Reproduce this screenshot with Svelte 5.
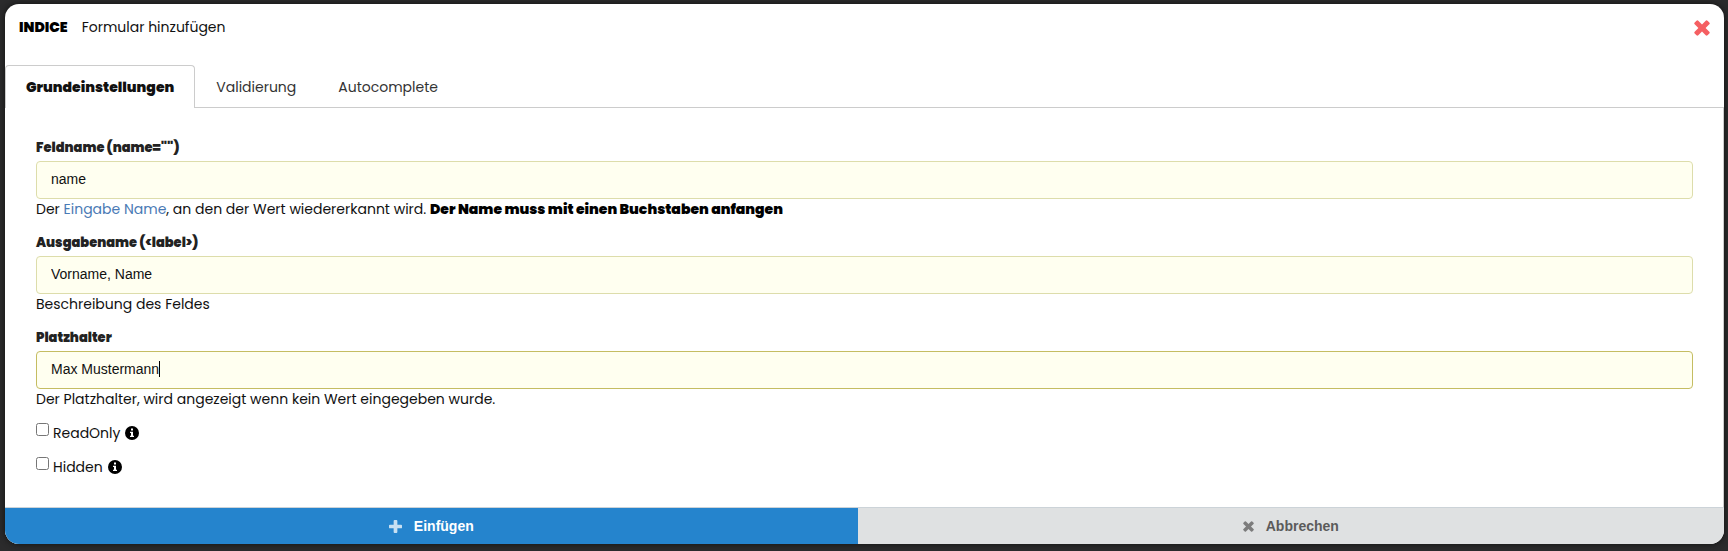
<script lang="ts">
  import { onMount } from 'svelte';

  const tabs = ['Grundeinstellungen', 'Validierung', 'Autocomplete'];

  let activeTab = $state(0);
  let fieldName = $state('name');
  let outputName = $state('Vorname, Name');
  let placeholder = $state('Max Mustermann');
  let readOnly = $state(false);
  let hidden = $state(false);

  let placeholderInput: HTMLInputElement;
  let caretOffset = $state(0);

  function updateCaret() {
    const ctx = document.createElement('canvas').getContext('2d');
    if (!ctx) return;
    ctx.font = getComputedStyle(placeholderInput).font;
    caretOffset = Math.round(ctx.measureText(placeholder).width);
  }

  onMount(updateCaret);
</script>

{#snippet cross()}
  <svg class="icon" viewBox="0 0 16 16" aria-hidden="true">
    <path d="M4.3.7 8 4.4 11.7.7q.9-.9 1.8 0l1.8 1.8q.9.9 0 1.8L11.6 8l3.7 3.7q.9.9 0 1.8l-1.8 1.8q-.9.9-1.8 0L8 11.6l-3.7 3.7q-.9.9-1.8 0L.7 13.5q-.9-.9 0-1.8L4.4 8 .7 4.3q-.9-.9 0-1.8L2.5.7q.9-.9 1.8 0z" />
  </svg>
{/snippet}

{#snippet info()}
  <svg class="info" viewBox="0 0 14 14" aria-hidden="true">
    <circle cx="7" cy="7" r="7" />
    <path d="M6 2.500h2v2H6zM5 5.700h3v4h1V11H5V9.700h1V7H5z" fill="#fff" />
  </svg>
{/snippet}

<div class="modal" role="dialog" aria-labelledby="dialog-title">
  <header>
    <strong>INDICE</strong>
    <span id="dialog-title">Formular hinzufügen</span>
    <button class="close" type="button" aria-label="Schließen">{@render cross()}</button>
  </header>

  <div class="tabs" role="tablist">
    {#each tabs as tab, i}
      <button
        type="button"
        role="tab"
        class="tab"
        class:active={activeTab === i}
        aria-selected={activeTab === i}
        onclick={() => (activeTab = i)}>{tab}</button>
    {/each}
  </div>

  <form class="content">
    <div class="field">
      <label for="field-name">Feldname (name="")</label>
      <input id="field-name" type="text" bind:value={fieldName} />
      <p>
        Der <a href="#name">Eingabe Name</a>, an den der Wert wiedererkannt wird.
        <b>Der Name muss mit einen Buchstaben anfangen</b>
      </p>
    </div>

    <div class="field">
      <label for="output-name">Ausgabename (&lt;label&gt;)</label>
      <input id="output-name" type="text" bind:value={outputName} />
      <p>Beschreibung des Feldes</p>
    </div>

    <div class="field">
      <label for="placeholder">Platzhalter</label>
      <div class="caret-box">
        <input
          id="placeholder"
          class="current"
          type="text"
          bind:this={placeholderInput}
          bind:value={placeholder}
          oninput={updateCaret}
        />
        <span class="caret" style="margin-left: {caretOffset}px"></span>
      </div>
      <p>Der Platzhalter, wird angezeigt wenn kein Wert eingegeben wurde.</p>
    </div>

    <label class="check">
      <input type="checkbox" bind:checked={readOnly} />
      <span>ReadOnly</span>
      {@render info()}
    </label>

    <label class="check">
      <input type="checkbox" bind:checked={hidden} />
      <span>Hidden</span>
      {@render info()}
    </label>
  </form>

  <footer>
    <button class="insert" type="button">
      <svg class="icon" viewBox="0 0 14 14" aria-hidden="true">
        <path d="M6 0h2q1 0 1 1v4h4q1 0 1 1v2q0 1-1 1H9v4q0 1-1 1H6q-1 0-1-1V9H1q-1 0-1-1V6q0-1 1-1h4V1q0-1 1-1z" />
      </svg>
      Einfügen
    </button>
    <button class="cancel" type="button">
      {@render cross()}
      Abbrechen
    </button>
  </footer>
</div>

<style>
  :global(body) {
    margin: 0;
    background: #2b2b2c;
  }

  .modal {
    margin: 4px 4px 7px 5px;
    overflow: hidden;
    border-radius: 14px;
    background: #fff;
    box-shadow: 0 0 6px #111;
    color: #111;
    font-family: Poppins, Inter, sans-serif;
    font-size: 14px;
    line-height: 20px;
  }

  button {
    padding: 0;
    border: 0;
    background: none;
    font: inherit;
    cursor: pointer;
  }

  .icon {
    fill: currentColor;
  }

  header {
    display: flex;
    align-items: center;
    gap: 14px;
    padding: 13px 14px 28px;
  }

  header strong {
    color: #000;
    font-weight: 900;
  }

  .close {
    display: flex;
    margin-left: auto;
    padding-top: 2px;
    color: #f55f62;
  }

  .close :global(svg) {
    width: 16px;
    height: 16px;
  }

  .tabs {
    display: flex;
    border-bottom: 1px solid #ccc;
  }

  .tab {
    margin-bottom: -1px;
    padding: 11px 20px;
    border: 1px solid transparent;
    border-bottom: 0;
    border-radius: 4px 4px 0 0;
    color: #333;
  }

  .tab.active {
    border-color: #ccc;
    background: #fff;
    color: #111;
    font-weight: 900;
  }

  .content {
    display: flex;
    flex-direction: column;
    gap: 14px;
    padding: 30px 30px 30px 31px;
    border-right: 1px solid #ccc;
  }

  .field {
    display: flex;
    flex-direction: column;
  }

  .field label {
    margin-bottom: 3px;
    color: #222;
    font-size: 13px;
    font-weight: 900;
  }

  .field input {
    box-sizing: border-box;
    width: 100%;
    height: 38px;
    padding: 0 14px 2px;
    border: 1px solid #ddddab;
    border-radius: 4px;
    outline: none;
    background: #fffff0;
    color: #111;
    font-family: 'Liberation Sans', Arial, sans-serif;
    font-size: 14px;
  }

  .field input.current {
    border-color: #c5bd62;
  }

  .caret-box {
    position: relative;
    display: flex;
  }

  .caret {
    position: absolute;
    top: 10px;
    left: 15px;
    width: 1px;
    height: 16px;
    background: #000;
  }

  p {
    margin: 0;
  }

  b {
    color: #000;
    font-weight: 900;
  }

  a {
    color: #4a7ab5;
    text-decoration: none;
  }

  .check {
    display: flex;
    align-self: flex-start;
    gap: 4px;
  }

  .check input {
    width: 13px;
    height: 13px;
    margin: 0;
  }

  .info {
    width: 14px;
    height: 14px;
    margin: 3px 0 0 1px;
    fill: #000;
  }

  footer {
    display: flex;
    border-top: 1px solid #ccd3d8;
    background: #dfe1e2;
  }

  footer button {
    display: flex;
    flex: 1;
    align-items: center;
    justify-content: center;
    gap: 12px;
    height: 36px;
    font-family: 'Liberation Sans', Arial, sans-serif;
    font-weight: 700;
  }

  footer .icon {
    width: 13px;
    height: 13px;
    opacity: 0.75;
  }

  .insert {
    flex: 0 0 auto;
    width: 49.6%;
    background: #2584cd;
    color: #fff;
  }

  .cancel {
    color: #5b5b5b;
  }

  .cancel :global(svg) {
    width: 11px;
    height: 11px;
  }
</style>
